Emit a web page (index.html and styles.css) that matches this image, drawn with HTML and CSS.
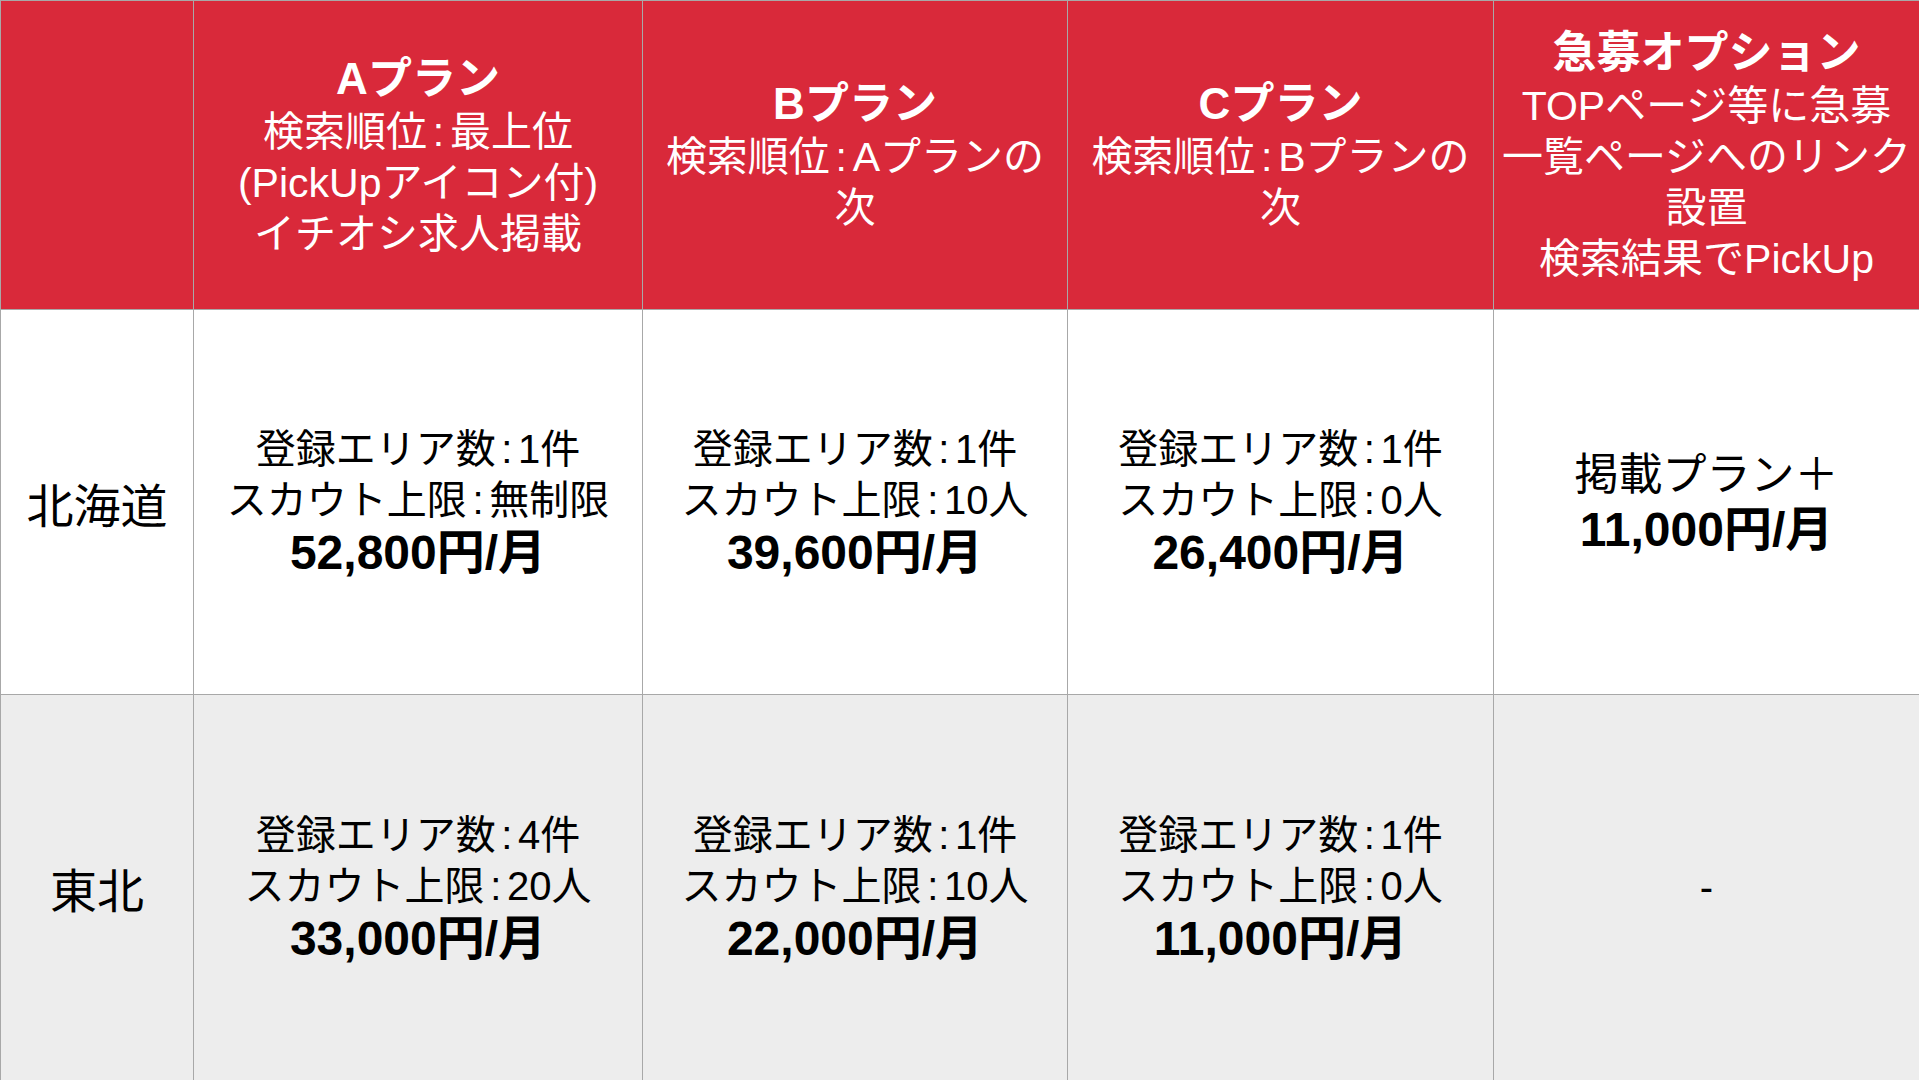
FILE: index.html
```html
<!DOCTYPE html>
<html lang="ja">
<head>
<meta charset="utf-8">
<title>料金プラン</title>
<link rel="stylesheet" href="styles.css">
</head>
<body>
<div class="table">
  <div class="cell head"></div>
  <div class="cell head">
    <div class="title">Aプラン</div>
    <div class="line">検索順位<span class="colon">:</span>最上位</div>
    <div class="line">(PickUpアイコン付)</div>
    <div class="line">イチオシ求人掲載</div>
  </div>
  <div class="cell head">
    <div class="title">Bプラン</div>
    <div class="line">検索順位<span class="colon">:</span>Aプランの</div>
    <div class="line">次</div>
  </div>
  <div class="cell head">
    <div class="title">Cプラン</div>
    <div class="line">検索順位<span class="colon">:</span>Bプランの</div>
    <div class="line">次</div>
  </div>
  <div class="cell head">
    <div class="title">急募オプション</div>
    <div class="line">TOPページ等に急募</div>
    <div class="line">一覧ページへのリンク</div>
    <div class="line">設置</div>
    <div class="line">検索結果でPickUp</div>
  </div>

  <div class="cell region">北海道</div>
  <div class="cell">
    <div class="line">登録エリア数<span class="colon">:</span>1件</div>
    <div class="line">スカウト上限<span class="colon">:</span>無制限</div>
    <div class="price">52,800円/月</div>
  </div>
  <div class="cell">
    <div class="line">登録エリア数<span class="colon">:</span>1件</div>
    <div class="line">スカウト上限<span class="colon">:</span>10人</div>
    <div class="price">39,600円/月</div>
  </div>
  <div class="cell">
    <div class="line">登録エリア数<span class="colon">:</span>1件</div>
    <div class="line">スカウト上限<span class="colon">:</span>0人</div>
    <div class="price">26,400円/月</div>
  </div>
  <div class="cell">
    <div class="option">掲載プラン＋</div>
    <div class="price">11,000円/月</div>
  </div>

  <div class="cell region alt">東北</div>
  <div class="cell alt">
    <div class="line">登録エリア数<span class="colon">:</span>4件</div>
    <div class="line">スカウト上限<span class="colon">:</span>20人</div>
    <div class="price">33,000円/月</div>
  </div>
  <div class="cell alt">
    <div class="line">登録エリア数<span class="colon">:</span>1件</div>
    <div class="line">スカウト上限<span class="colon">:</span>10人</div>
    <div class="price">22,000円/月</div>
  </div>
  <div class="cell alt">
    <div class="line">登録エリア数<span class="colon">:</span>1件</div>
    <div class="line">スカウト上限<span class="colon">:</span>0人</div>
    <div class="price">11,000円/月</div>
  </div>
  <div class="cell alt">
    <div class="line">-</div>
  </div>
</div>
</body>
</html>
```

FILE: styles.css
```css
* { box-sizing: border-box; }

html, body {
  margin: 0;
  padding: 0;
  background: #ffffff;
}

body {
  font-family: "Liberation Sans", "Noto Sans CJK JP", sans-serif;
  color: #000000;
  overflow: hidden;
}

.table {
  display: grid;
  grid-template-columns: 193px 449px 425px 426px 426px;
  grid-template-rows: 309px 385px 386px;
  width: 1919px;
  height: 1080px;
  border-top: 1px solid #a8a8a8;
  border-left: 1px solid #a8a8a8;
}

.cell {
  display: flex;
  flex-direction: column;
  align-items: center;
  justify-content: center;
  text-align: center;
  border-right: 1px solid #a8a8a8;
  border-bottom: 1px solid #a8a8a8;
  background: #ffffff;
  white-space: nowrap;
}

.cell.alt {
  background: #ededed;
}

.cell.head {
  background: #d9293a;
  color: #ffffff;
}

.title {
  font-size: 44px;
  font-weight: bold;
  line-height: 56px;
}

.line {
  font-size: 40px;
  line-height: 51px;
}

.head .line {
  font-size: 41px;
}

.colon {
  margin: 0 0.14em;
}

.price {
  font-size: 48px;
  font-weight: bold;
  line-height: 54px;
}

.option {
  font-size: 44px;
  line-height: 56px;
}

.region {
  font-size: 47px;
}
```
